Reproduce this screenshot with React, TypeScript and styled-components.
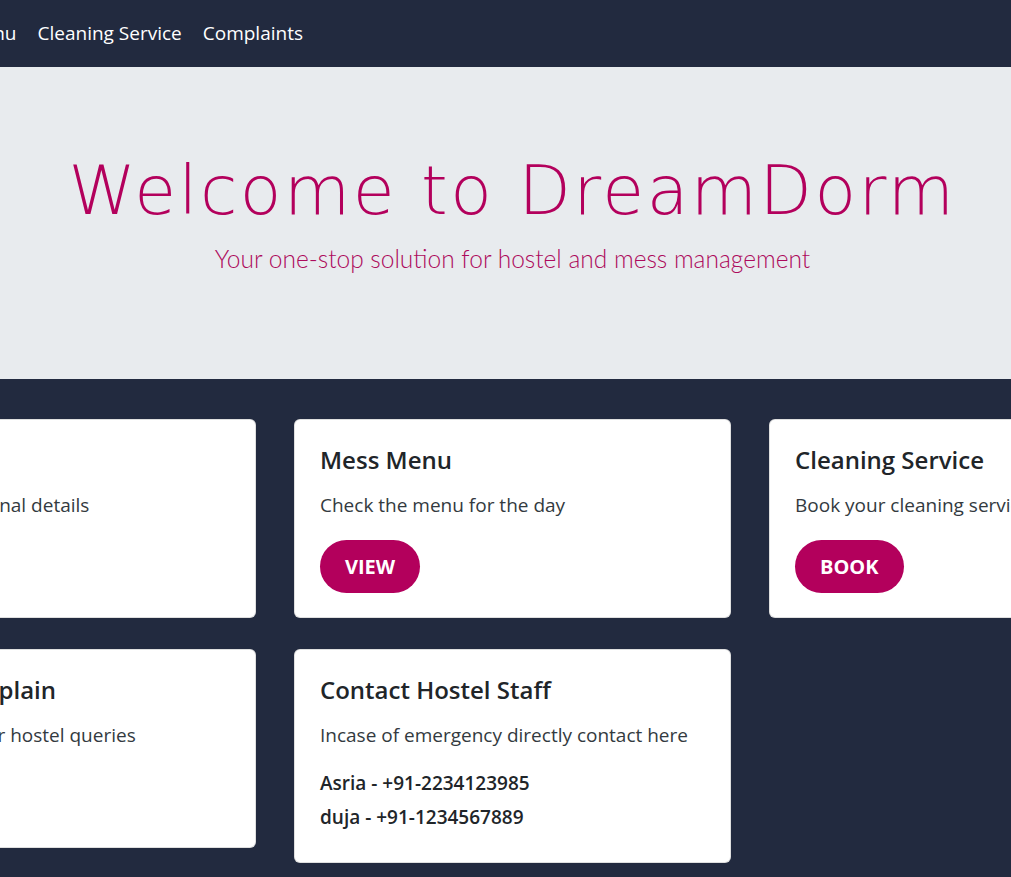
import React from 'react';
import styled, { createGlobalStyle } from 'styled-components';

// card data
interface Service {
  title: string;
  text: string;
  action?: string;
  contacts?: string[];
}

const services: Service[] = [
  { title: 'Profile', text: 'Check your personal details', action: 'VIEW' },
  { title: 'Mess Menu', text: 'Check the menu for the day', action: 'VIEW' },
  { title: 'Cleaning Service', text: 'Book your cleaning service', action: 'BOOK' },
  { title: 'Register Complain', text: 'Complain for your hostel queries', action: 'RAISE' },
  {
    title: 'Contact Hostel Staff',
    text: 'Incase of emergency directly contact here',
    contacts: ['Asria - +91-2234123985', 'duja - +91-1234567889'],
  },
];

const links = ['Home', 'Profile', 'Mess Menu', 'Cleaning Service', 'Complaints'];

const App = () => {
  return (
    <>
      <GlobalStyle />
      <Page>
        <Nav>
          <NavLinks>
            {links.map((l) => (
              <NavLink key={l} href='#'>
                {l}
              </NavLink>
            ))}
          </NavLinks>
        </Nav>

        <Hero>
          <HeroTitle>Welcome to DreamDorm</HeroTitle>
          <HeroSub>Your one-stop solution for hostel and mess management</HeroSub>
        </Hero>

        <CardGrid>
          {services.map((s) => (
            <Card key={s.title}>
              <CardTitle>{s.title}</CardTitle>
              <CardText>{s.text}</CardText>
              {s.action && <PillButton>{s.action}</PillButton>}
              {s.contacts && (
                <ContactList>
                  {s.contacts.map((c) => (
                    <ContactLine key={c}>{c}</ContactLine>
                  ))}
                </ContactList>
              )}
            </Card>
          ))}
        </CardGrid>
      </Page>
    </>
  );
};

export default App;

// Styled components
const GlobalStyle = createGlobalStyle`
  html, body {
    margin: 0;
    padding: 0;
    background: #222a3f;
    overflow: hidden;
  }
  body {
    font-family: 'Open Sans', 'Noto Sans', sans-serif;
  }
  * {
    box-sizing: border-box;
  }
`;

// the page is wider than the window and has been scrolled sideways
const Page = styled.div`
  width: 1387px;
  margin-left: -181px;
  min-height: 877px;
  background: #222a3f;
`;

const Nav = styled.nav`
  height: 67px;
  display: flex;
  align-items: center;
  background: #222a3f;
`;

const NavLinks = styled.div`
  width: 484px;
  display: flex;
  justify-content: flex-end;
  gap: 21px;
  white-space: nowrap;
`;

const NavLink = styled.a`
  color: #ffffff;
  font-size: 19px;
  text-decoration: none;
  padding-bottom: 1px;
`;

const Hero = styled.header`
  height: 312px;
  background: #e8ebee;
  display: flex;
  flex-direction: column;
  align-items: center;
  padding-top: 84px;
`;

const HeroTitle = styled.h1`
  margin: 0;
  font-family: 'DejaVu Sans', 'Lato', sans-serif;
  font-weight: 200;
  font-size: 68px;
  line-height: 80px;
  letter-spacing: 2.5px;
  color: #b3005c;
  white-space: nowrap;
`;

const HeroSub = styled.p`
  margin: 10px 0 0;
  font-family: 'Lato', sans-serif;
  font-weight: 300;
  font-size: 24.5px;
  line-height: 36px;
  color: #ad0a5c;
`;

const CardGrid = styled.section`
  display: grid;
  grid-template-columns: repeat(3, 437px);
  column-gap: 38px;
  row-gap: 31px;
  align-items: start;
  padding-top: 40px;
`;

const Card = styled.div`
  background: #ffffff;
  border: 1px solid rgba(0, 0, 0, 0.125);
  border-radius: 6px;
  padding: 25px 25px 24px;
`;

const CardTitle = styled.h5`
  margin: 0 0 18px;
  font-size: 24px;
  font-weight: 600;
  line-height: 29px;
  color: #212529;
  white-space: nowrap;
`;

const CardText = styled.p`
  margin: 0 0 21px;
  font-size: 19px;
  line-height: 27px;
  color: #333a40;
  white-space: nowrap;
`;

const PillButton = styled.button`
  height: 53px;
  padding: 0 25px;
  border: none;
  border-radius: 27px;
  background: #b3005c;
  color: #ffffff;
  font-family: inherit;
  font-size: 20px;
  font-weight: 700;
  cursor: pointer;
`;

const ContactList = styled.div`
  margin-top: -4px;
  margin-bottom: 4px;
`;

const ContactLine = styled.p`
  margin: 0;
  font-size: 19px;
  font-weight: 600;
  line-height: 34px;
  color: #212529;
`;
